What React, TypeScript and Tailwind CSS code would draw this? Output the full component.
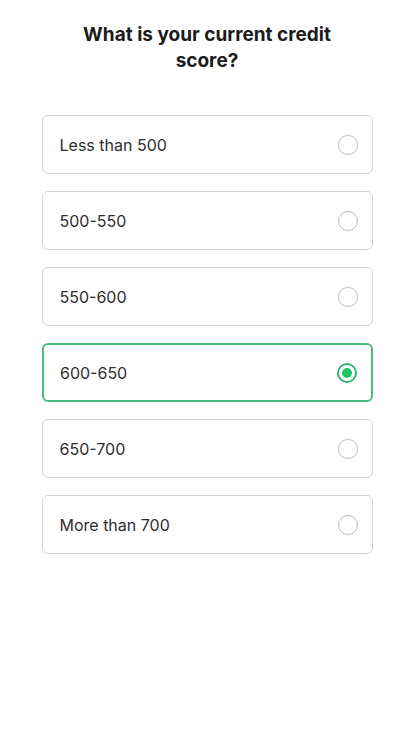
import React, { useState } from "react";

const options = [
  "Less than 500",
  "500-550",
  "550-600",
  "600-650",
  "650-700",
  "More than 700",
];

const Radio = ({ checked }: { checked: boolean }) => (
  <span
    className={
      checked
        ? "flex h-[20px] w-[20px] items-center justify-center rounded-full border-2 border-[#35b56f]"
        : "h-[20px] w-[20px] rounded-full border border-[#bdbdbd]"
    }
  >
    {checked && <span className="h-[10px] w-[10px] rounded-full bg-[#1ec465]" />}
  </span>
);

export default function App() {
  const [selected, setSelected] = useState("600-650");

  return (
    <div
      className="min-h-[736px] w-full bg-white pt-[22px]"
      style={{ fontFamily: "Inter, 'Noto Sans', sans-serif" }}
    >
      <h1 className="mx-auto w-[280px] text-center text-[19px] font-bold leading-[26px] text-[#1c1c1c]">
        What is your current credit score?
      </h1>

      <div className="ml-[42px] mt-[41px] flex w-[331px] flex-col gap-[17px]">
        {options.map((opt) => {
          const active = opt === selected;
          return (
            <button
              key={opt}
              onClick={() => setSelected(opt)}
              className={
                active
                  ? "flex h-[59px] items-center justify-between rounded-[6px] border-2 border-[#4dbb80] pl-[16px] pr-[14px] text-left"
                  : "flex h-[59px] items-center justify-between rounded-[6px] border-[1.5px] border-[#d3d3d3] pl-[16.5px] pr-[14.5px] text-left"
              }
            >
              <span className="text-[16px] text-[#2e2e2e]">{opt}</span>
              <Radio checked={active} />
            </button>
          );
        })}
      </div>
    </div>
  );
}
